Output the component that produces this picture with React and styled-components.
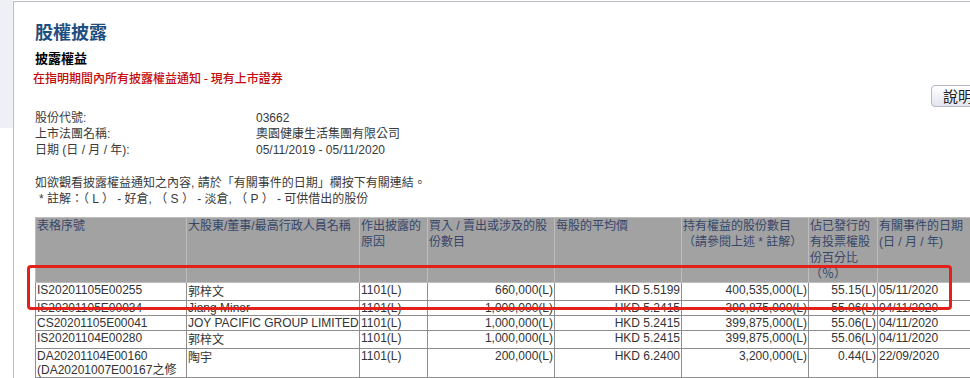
import React from "react";
import styled, { createGlobalStyle } from "styled-components";

const GlobalStyle = createGlobalStyle`
  html, body {
    margin: 0;
    padding: 0;
    background: #fff;
    overflow: hidden;
  }
  body {
    font-family: "Liberation Sans", "Noto Sans CJK TC", Arial, sans-serif;
    color: #333;
  }
`;

const columns = [
  { width: 151, title: ["表格序號"] },
  { width: 173, title: ["大股東/董事/最高行政人員名稱"] },
  { width: 68, title: ["作出披露的", "原因"] },
  { width: 127, title: ["買入 / 賣出或涉及的股", "份數目"] },
  { width: 127, title: ["每股的平均價"] },
  { width: 127, title: ["持有權益的股份數目", "（請參閱上述 * 註解）"] },
  { width: 69, title: ["佔已發行的", "有投票權股", "份百分比", "（％）"] },
  { width: 100, title: ["有關事件的日期", "(日 / 月 / 年)"] },
];

const rows = [
  { id: ["IS20201105E00255"], name: "郭梓文", cjk: true, reason: "1101(L)", qty: "660,000(L)", price: "HKD 5.5199", held: "400,535,000(L)", pct: "55.15(L)", date: "05/11/2020" },
  { id: ["IS20201105E00034"], name: "Jiang Minor", reason: "1101(L)", qty: "1,000,000(L)", price: "HKD 5.2415", held: "399,875,000(L)", pct: "55.06(L)", date: "04/11/2020" },
  { id: ["CS20201105E00041"], name: "JOY PACIFIC GROUP LIMITED", reason: "1101(L)", qty: "1,000,000(L)", price: "HKD 5.2415", held: "399,875,000(L)", pct: "55.06(L)", date: "04/11/2020" },
  { id: ["IS20201104E00280"], name: "郭梓文", cjk: true, reason: "1101(L)", qty: "1,000,000(L)", price: "HKD 5.2415", held: "399,875,000(L)", pct: "55.06(L)", date: "04/11/2020" },
  { id: ["DA20201104E00160", "(DA20201007E00167之修"], name: "陶宇", cjk: true, reason: "1101(L)", qty: "200,000(L)", price: "HKD 6.2400", held: "3,200,000(L)", pct: "0.44(L)", date: "22/09/2020" },
];

const info = [
  ["股份代號:", "03662"],
  ["上市法團名稱:", "奧園健康生活集團有限公司"],
  ["日期 (日 / 月 / 年):", "05/11/2019 - 05/11/2020"],
];

const App = () => {
  return (
    <Page>
      <GlobalStyle />
      <SideStrip />
      <Panel>
        <Title>股權披露</Title>
        <SubTitle>披露權益</SubTitle>
        <Notice>在指明期間內所有披露權益通知 - 現有上市證券</Notice>
        <ButtonRow>
          <HelpButton>說明文件</HelpButton>
        </ButtonRow>
        <InfoGrid>
          {info.map(([label, value]) => (
            <React.Fragment key={label}>
              <InfoLabel>{label}</InfoLabel>
              <InfoValue>{value}</InfoValue>
            </React.Fragment>
          ))}
        </InfoGrid>
        <Notes>
          <NoteLine>如欲觀看披露權益通知之內容, 請於「有關事件的日期」欄按下有關連結。</NoteLine>
          <NoteLine $indent>* 註解：（ L ） - 好倉, （ S ） - 淡倉, （ P ） - 可供借出的股份</NoteLine>
        </Notes>
        <Table>
          <colgroup>
            {columns.map((c, i) => (
              <col key={i} style={{ width: c.width }} />
            ))}
          </colgroup>
          <thead>
            <tr>
              {columns.map((c, i) => (
                <HeadCell key={i}>
                  {c.title.map((line, j) => (
                    <div key={j}>{line}</div>
                  ))}
                </HeadCell>
              ))}
            </tr>
          </thead>
          <tbody>
            {rows.map((r, i) => (
              <tr key={i}>
                <Cell>
                  {r.id.map((line, j) => (
                    <div key={j}>{line}</div>
                  ))}
                </Cell>
                <Cell $cjk={r.cjk}>{r.name}</Cell>
                <Cell>{r.reason}</Cell>
                <Cell $right>{r.qty}</Cell>
                <Cell $right>{r.price}</Cell>
                <Cell $right>{r.held}</Cell>
                <Cell $right>{r.pct}</Cell>
                <Cell>{r.date}</Cell>
              </tr>
            ))}
          </tbody>
        </Table>
        <Highlight />
      </Panel>
    </Page>
  );
};

const Page = styled.div`
  display: flex;
  width: 970px;
  height: 378px;
  overflow: hidden;
`;
const SideStrip = styled.div`
  flex: 0 0 13px;
  height: 128px;
  background: #eef0f5;
`;
const Panel = styled.div`
  position: relative;
  flex: 1;
  min-width: 0;
  margin-top: 1px;
  padding-left: 21px;
  border-left: 1px solid #b9bdcb;
  border-top: 1px solid #b9bdcb;
  overflow: hidden;
  font-family: "Liberation Sans", "Noto Sans CJK TC", Arial, sans-serif;
`;
const Title = styled.h1`
  margin: 0;
  padding-top: 17px;
  font-size: 18px;
  line-height: 24px;
  font-weight: 700;
  color: #1d4e80;
  font-family: "Noto Sans CJK TC", sans-serif;
`;
const SubTitle = styled.h2`
  margin: 7px 0 0;
  font-size: 13px;
  line-height: 16px;
  font-weight: 700;
  color: #000;
  font-family: "Noto Sans CJK TC", sans-serif;
`;
const Notice = styled.div`
  margin: 4px 0 0 -2px;
  font-size: 12px;
  line-height: 16px;
  font-weight: 500;
  color: #c40a0a;
  font-family: "Noto Sans CJK TC", sans-serif;
`;
const ButtonRow = styled.div`
  display: flex;
  justify-content: flex-end;
  margin: -1px -42px 0 0;
`;
const HelpButton = styled.button`
  height: 22px;
  padding: 0 8px 0 11px;
  border: 1px solid #b4b8c8;
  border-radius: 4px;
  background: linear-gradient(#ffffff, #e4e5ee);
  font-family: "Noto Sans CJK TC", sans-serif;
  font-size: 15px;
  line-height: 20px;
  color: #222;
`;
const InfoGrid = styled.div`
  display: grid;
  grid-template-columns: 221px auto;
  margin-top: 3px;
  font-size: 12px;
  line-height: 16px;
  color: #3a3a3a;
`;
const InfoLabel = styled.div``;
const InfoValue = styled.div``;
const Notes = styled.div`
  margin-top: 17px;
  font-size: 12px;
  line-height: 16px;
  color: #3a3a3a;
`;
const NoteLine = styled.div`
  padding-left: ${(p) => (p.$indent ? "4px" : "0")};
`;
const Table = styled.table`
  margin-top: 10px;
  border-collapse: collapse;
  table-layout: fixed;
  width: 942px;
  font-size: 12px;
`;
const HeadCell = styled.th`
  height: 64px;
  padding: 0 1px;
  vertical-align: top;
  text-align: left;
  font-weight: 400;
  line-height: 16px;
  color: #36466a;
  background: #a2a2a2;
  border: 1px solid #bdbdbd;
  white-space: nowrap;
  overflow: hidden;
`;
const Cell = styled.td`
  padding: ${(p) => (p.$cjk ? "1px 1px 0" : "0 1px")};
  vertical-align: top;
  text-align: ${(p) => (p.$right ? "right" : "left")};
  line-height: ${(p) => (p.$cjk ? "16px" : "14px")};
  color: #333;
  border: 1px solid #8e8e8e;
  white-space: nowrap;
  overflow: hidden;
`;
const Highlight = styled.div`
  position: absolute;
  left: 13px;
  top: 263px;
  width: 925px;
  height: 45px;
  box-sizing: border-box;
  border: 3px solid #e4201b;
  border-radius: 4px;
  pointer-events: none;
`;

export default App;
